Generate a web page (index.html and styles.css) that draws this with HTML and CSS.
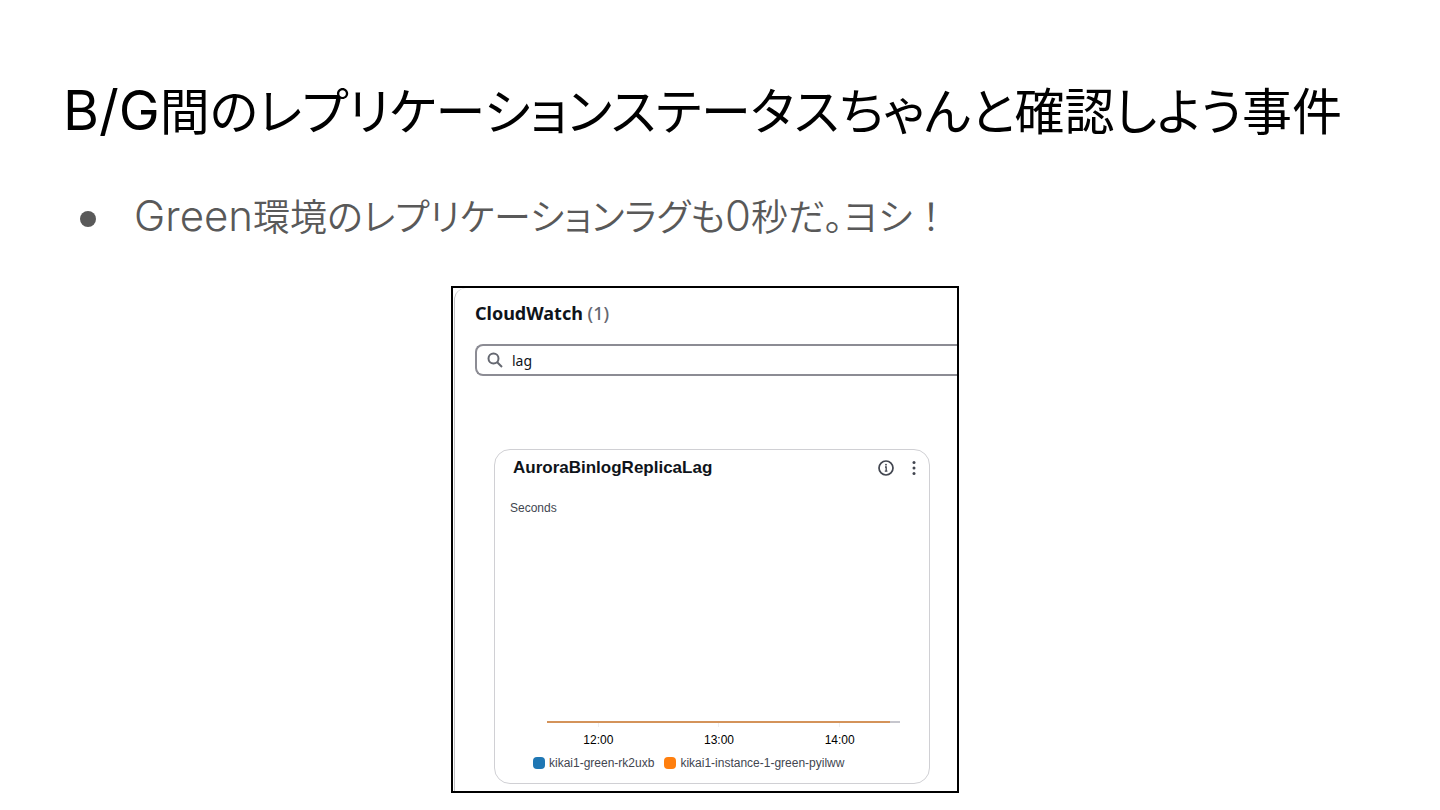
FILE: index.html
```html
<!DOCTYPE html>
<html lang="ja">
<head>
  <meta charset="UTF-8" />
  <meta name="viewport" content="width=device-width,initial-scale=1.0" />
  <title>B/G間のレプリケーションステータスちゃんと確認しよう事件</title>
  <link rel="stylesheet" href="styles.css">
</head>
<body>

  <main class="slide">
    <h1><span class="latin">B/G</span>間のレプリケーションステータスちゃんと確認しよう事件</h1>
    <ul class="points">
      <li><p><span class="latin">Green</span>環境のレプリケーションラグも<span class="latin">0</span>秒だ。ヨシ<span class="full">！</span></p></li>
    </ul>

    <div class="figure-row">
      <section class="frame">
        <div class="panel">
          <h2>CloudWatch <span class="count">(1)</span></h2>

          <label class="search">
            <svg width="16" height="16" viewBox="0 0 16 16" fill="none" stroke="#656871" stroke-width="2" aria-hidden="true">
              <circle cx="6.5" cy="6.5" r="5" />
              <path d="M10.2 10.2L15 15" />
            </svg>
            <input type="text" value="lag" aria-label="Search metrics">
          </label>

          <article class="card">
            <header class="card-header">
              <h3>AuroraBinlogReplicaLag</h3>
              <button type="button" aria-label="Info">
                <svg width="16" height="16" viewBox="0 0 16 16" fill="none" stroke="#424650" aria-hidden="true">
                  <circle cx="8" cy="8" r="7" stroke-width="1.7" />
                  <path d="M7 7h1.2v4.2M6.8 11.2h2.6" stroke-width="1.3" />
                  <circle cx="8" cy="4.7" r="0.9" fill="#424650" stroke="none" />
                </svg>
              </button>
              <button type="button" aria-label="Actions">
                <svg width="16" height="16" viewBox="0 0 16 16" fill="#424650" aria-hidden="true">
                  <circle cx="8" cy="2.4" r="1.5" />
                  <circle cx="8" cy="8" r="1.5" />
                  <circle cx="8" cy="13.6" r="1.5" />
                </svg>
              </button>
            </header>
            <p class="unit">Seconds</p>
            <div class="plot"></div>
            <div class="ticks">
              <span>12:00</span>
              <span>13:00</span>
              <span>14:00</span>
            </div>
            <ul class="legend">
              <li class="blue">kikai1-green-rk2uxb</li>
              <li class="orange">kikai1-instance-1-green-pyilww</li>
            </ul>
          </article>
        </div>
      </section>
    </div>
  </main>

</body>
</html>
```

FILE: styles.css
```css
* { margin: 0; padding: 0; box-sizing: border-box; }
body {
  background: #fff;
  color: #000;
  font-family: "Liberation Sans", Arial, sans-serif;
}
.slide { padding: 72px 0 16px; }
h1, .points {
  font-family: "Noto Sans CJK JP", sans-serif;
  font-feature-settings: "palt";
  font-weight: 350;
  white-space: nowrap;
}
h1 {
  padding-left: 63px;
  font-size: 50px;
  font-weight: 400;
  line-height: 72px;
}
h1 .latin { font-size: 55px; }
.latin {
  font-family: Inter, sans-serif;
  font-size: 42px;
  line-height: 1;
}
.full { font-feature-settings: normal; }
.points {
  list-style: none;
  margin-top: 43px;
  padding-left: 80px;
  font-size: 37px;
  line-height: 56px;
  color: #595959;
}
.points li {
  display: flex;
  align-items: center;
  gap: 38px;
}
.points li::before {
  content: "";
  width: 16px; height: 16px;
  margin-top: 7px;
  border-radius: 50%;
  background: #595959;
}

.figure-row {
  display: grid;
  grid-template-columns: 451fr 508fr 481fr;
  margin-top: 43px;
}
.frame {
  grid-column: 2;
  border: 2px solid #000;
  padding-left: 1px;
  overflow: hidden;
}
.panel {
  border-left: 1px solid #c0c0c4;
  border-radius: 12px 0 0 0;
  padding: 11px 0 7px 20px;
}
h2 {
  font-family: "Noto Sans", sans-serif;
  font-size: 18px;
  line-height: 28px;
  color: #0f141a;
}
.count { font-weight: 500; color: #656871; }
.search {
  display: flex;
  align-items: center;
  gap: 9px;
  height: 32px;
  margin-top: 17px;
  padding-left: 10px;
  border: 2px solid #8c8c94;
  border-right: 0;
  border-radius: 8px 0 0 8px;
}
.search input {
  flex: 1;
  min-width: 0;
  border: 0;
  outline: 0;
  background: none;
  font: 14px "Noto Sans", sans-serif;
  color: #0f141a;
}

.card {
  margin: 73px 27px 0 19px;
  padding: 8px 29px 12px 15px;
  border: 1px solid #d0d0d4;
  border-radius: 16px;
}
.card-header {
  display: flex;
  align-items: center;
  gap: 12px;
  margin-right: -22px;
  padding: 0 0 0 3px;
}
h3 {
  flex: 1;
  font-size: 17px;
  line-height: 20px;
  color: #0f141a;
}
.card-header button {
  width: 16px; height: 16px;
  border: 0;
  background: none;
}
.card-header svg { display: block; }
.unit {
  margin-top: 22px;
  font-size: 12px;
  line-height: 16px;
  color: #424650;
}
.plot {
  height: 207px;
  margin-left: 37px;
  border-bottom: 2px solid #c6c6cd;
  border-image: linear-gradient(to right, #d4935a 97%, #c6c6cd 97%) 1;
}
.ticks {
  display: grid;
  grid-template-columns: repeat(3, 1fr);
  margin-left: 28px;
  text-align: center;
  font-size: 12px;
  line-height: 16px;
}
.ticks span::before {
  content: "";
  display: block;
  width: 1px; height: 4px;
  margin: 0 auto 5px;
  background: #eee;
}
.legend {
  list-style: none;
  display: flex;
  gap: 10px;
  margin: 7px -29px 0 23px;
  font-size: 12px;
  line-height: 16px;
  color: #424650;
  white-space: nowrap;
}
.legend li {
  display: flex;
  align-items: center;
  gap: 4px;
}
.legend li::before {
  content: "";
  width: 12px; height: 12px;
  border-radius: 4px;
}
.legend .blue::before { background: #1f77b4; }
.legend .orange::before { background: #ff7f0e; }
```
